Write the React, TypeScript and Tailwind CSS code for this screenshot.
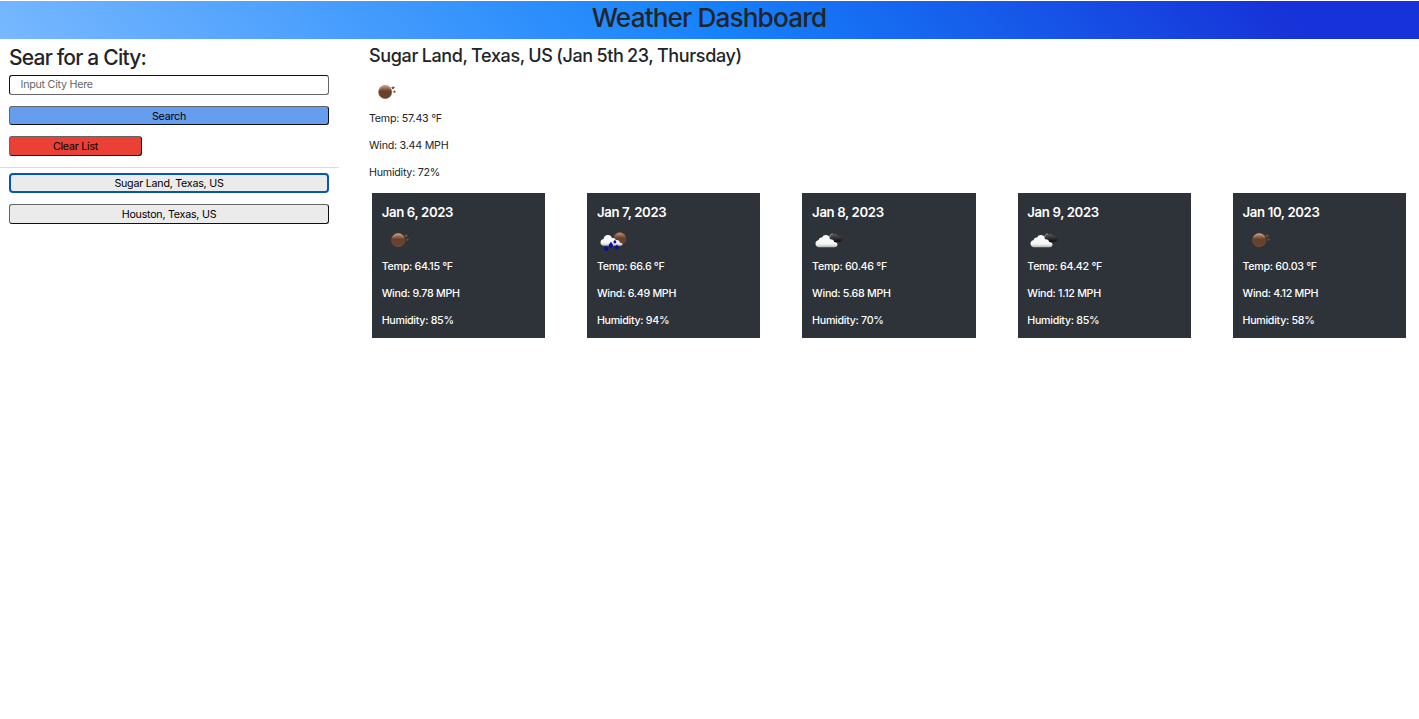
import React from "react";

type IconKind = "clear" | "cloudy" | "rain";

function WeatherIcon({ kind }: { kind: IconKind }) {
  const id = React.useId();
  return (
    <svg width="34" height="34" viewBox="0 0 34 34" className="block" aria-hidden="true">
      <defs>
        <linearGradient id={id + "m"} x1="0" y1="0" x2="0" y2="1">
          <stop offset="0" stopColor="#c59a82" />
          <stop offset="0.3" stopColor="#8a5a3f" />
          <stop offset="0.45" stopColor="#64402b" />
          <stop offset="1" stopColor="#6d432c" />
        </linearGradient>
        <linearGradient id={id + "c"} x1="0" y1="0" x2="0" y2="1">
          <stop offset="0" stopColor="#ffffff" />
          <stop offset="0.75" stopColor="#f4f4f4" />
          <stop offset="1" stopColor="#b5b5b5" />
        </linearGradient>
        <linearGradient id={id + "d"} x1="0" y1="0" x2="0" y2="1">
          <stop offset="0" stopColor="#5a5a5c" />
          <stop offset="0.5" stopColor="#333335" />
          <stop offset="1" stopColor="#0c0c0e" />
        </linearGradient>
      </defs>
      {kind === "clear" && (
        <g>
          <circle cx="16.2" cy="17" r="6.7" fill={`url(#${id}m)`} stroke="#8c6048" strokeWidth="0.4" />
          <path d="M10.9 14.3q1.7-3 5-3.4 3.5-.2 5.6 3.2" fill="none" stroke="#d3ad98" strokeWidth="0.9" opacity="0.7" />
          <path d="M24.1 10.9l.6 1.2 1.3.2-1 .9.2 1.2-1.1-.6-1.2.6.2-1.2-.9-.9 1.3-.2zM25.4 15.1l.5 1 1 .2-.7.7.1 1-.9-.4-.9.4.2-1-.8-.7 1.1-.2z" fill="#795038" />
        </g>
      )}
      {kind === "cloudy" && (
        <g>
          <path d="M17.7 16c-1-3 1-5.2 3.5-5 1.4-.5 3.6-.2 4.8 1.4 2-.1 3.1 1 3 2.3 1.4.3 2.4.8 2.3 1.7-.1.8-1 1-2 1.1-.2 1-1.2 1.6-2.6 1.6H20z" fill={`url(#${id}d)`} />
          <path d="M17.8 14c0-2 1.2-3 3-3.1" fill="none" stroke="#a6a6a8" strokeWidth="0.9" />
          <path d="M7.3 24.2c-2.2 0-3.8-1.4-3.8-3.5 0-2 1.3-3.3 3.2-3.6.2-2 1.6-2.9 3.4-2.6 1-2.1 3-2.9 5-2.2 2 .6 2.9 2.1 2.8 4 2.2-.4 4 .6 4.2 2.7 2.1 0 3.4 1 3.4 2.7 0 1.6-1.2 2.5-3.2 2.5z" fill={`url(#${id}c)`} />
        </g>
      )}
      {kind === "rain" && (
        <g>
          <circle cx="22.8" cy="15.6" r="6" fill={`url(#${id}m)`} stroke="#805b48" strokeWidth="0.5" />
          <path d="M6.7 22.8c-2-.2-3.2-1.5-3.2-3.3 0-1.9 1.2-3.1 3-3.4.3-2.2 1.7-4.2 4.3-4.2 2.3 0 3.8 1.2 4.3 3.3 1.7-.6 3.3.3 3.6 2 2-.8 4.2.5 4.2 2.5 1.6.1 2.8.9 2.6 1.8-.2.8-1.1 1.3-2.3 1.3z" fill={`url(#${id}c)`} />
          <path d="M9.4 23l1.4 2q.7 2.5-1.5 2.6-2.3-.1-1.6-2.6zM14 18.9l1.7 2.6q.8 2.8-1.8 2.9-2.6-.2-1.8-2.9zM17.9 17.1l1.2 1.4q.4 1.7-1.2 1.8-1.7-.1-1.3-1.8zM19.9 21.7l1.4 2q.7 2.4-1.5 2.5-2.2-.1-1.5-2.5z" fill="#0a0aa8" stroke="#0a0aa8" strokeWidth="0.3" />
        </g>
      )}
    </svg>
  );
}

const forecast: { date: string; icon: IconKind; temp: string; wind: string; humidity: string }[] = [
  { date: "Jan 6, 2023", icon: "clear", temp: "64.15", wind: "9.78", humidity: "85" },
  { date: "Jan 7, 2023", icon: "rain", temp: "66.6", wind: "6.49", humidity: "94" },
  { date: "Jan 8, 2023", icon: "cloudy", temp: "60.46", wind: "5.68", humidity: "70" },
  { date: "Jan 9, 2023", icon: "cloudy", temp: "64.42", wind: "1.12", humidity: "85" },
  { date: "Jan 10, 2023", icon: "clear", temp: "60.03", wind: "4.12", humidity: "58" },
];

export default function App() {
  return (
    <div className="min-h-[719px] bg-white pt-px font-['Inter',sans-serif] text-[10.7px] tracking-[-0.24px] text-[#212529]">
      <header className="flex h-[38px] items-center justify-center bg-[linear-gradient(45deg,#78b8ff_0%,#1682fb_50%,#1732d8_90%)] pr-px pb-[5px]">
        <h1 className="text-[26.2px] leading-8 font-medium tracking-[-0.87px]">Weather Dashboard</h1>
      </header>

      <div className="flex">
        <aside className="w-[339px] shrink-0">
          <div className="flex flex-col pr-[10px] pl-[9px]">
            <h2 className="mt-[6px] h-[30px] text-[21px] leading-[26px] font-medium tracking-[-0.8px]">Sear for a City:</h2>
            <input
              className="h-5 rounded-[3px] border border-t-[#111] border-l-[#111] border-r-[#666] border-b-[#666] pr-[10px] pb-px pl-[10.5px] text-[10.7px] tracking-[-0.24px] placeholder:text-[#666] placeholder:opacity-100"
              placeholder="Input City Here"
            />
            <button className="mt-[11px] h-[19px] rounded-[3px] border border-t-[#666] border-l-[#666] border-r-[#111] border-b-[#111] bg-[#659def] pt-[2px] leading-4 text-black">
              Search
            </button>
            <button className="mt-[11px] h-5 w-[133px] rounded-[3px] border border-t-[#666] border-l-[#666] border-r-[#111] border-b-[#111] bg-[#ea4036] pt-[2px] leading-4 text-black">
              Clear List
            </button>
          </div>
          <div className="mt-[11px] h-px bg-[#dcdcdd]" />
          <div className="flex flex-col gap-[11px] pt-[5px] pr-[10px] pl-[9px]">
            <button className="h-5 rounded-[4px] border-2 border-[#0656b8] bg-[#ebebeb] pt-px leading-[15px] text-black">
              Sugar Land, Texas, US
            </button>
            <button className="h-5 rounded-[3px] border border-t-[#666] border-l-[#666] border-r-[#111] border-b-[#111] bg-[#ebebeb] pt-[2px] leading-4 text-black">
              Houston, Texas, US
            </button>
          </div>
        </aside>

        <main className="flex-1 pr-[13px] pl-[30px]">
          <h3 className="mt-[5px] h-[31px] text-[18px] leading-[24px] font-medium tracking-[-0.36px] [word-spacing:-0.8px]">
            Sugar Land, Texas, US (Jan 5th 23, Thursday)
          </h3>
          <div className="h-[34px]">
            <WeatherIcon kind="clear" />
          </div>
          <div className="flex flex-col gap-[11px] pt-[2px] leading-4">
            <p>Temp: 57.43 °F</p>
            <p>Wind: 3.44 MPH</p>
            <p>Humidity: 72%</p>
          </div>
          <div className="mt-[12px] flex justify-between pl-[3px]">
            {forecast.map((day) => (
              <section key={day.date} className="h-[145px] w-[173.2px] bg-[#2e3239] pt-[10px] pl-[9.7px] font-medium text-white">
                <h4 className="h-5 text-[13.2px] leading-[18px] font-semibold tracking-[-0.36px]">{day.date}</h4>
                <div className="h-[34px]">
                  <WeatherIcon kind={day.icon} />
                </div>
                <div className="flex flex-col gap-[11px] pt-[2px] leading-4 tracking-[-0.3px]">
                  <p>Temp: {day.temp} °F</p>
                  <p>Wind: {day.wind} MPH</p>
                  <p>Humidity: {day.humidity}%</p>
                </div>
              </section>
            ))}
          </div>
        </main>
      </div>
    </div>
  );
}
